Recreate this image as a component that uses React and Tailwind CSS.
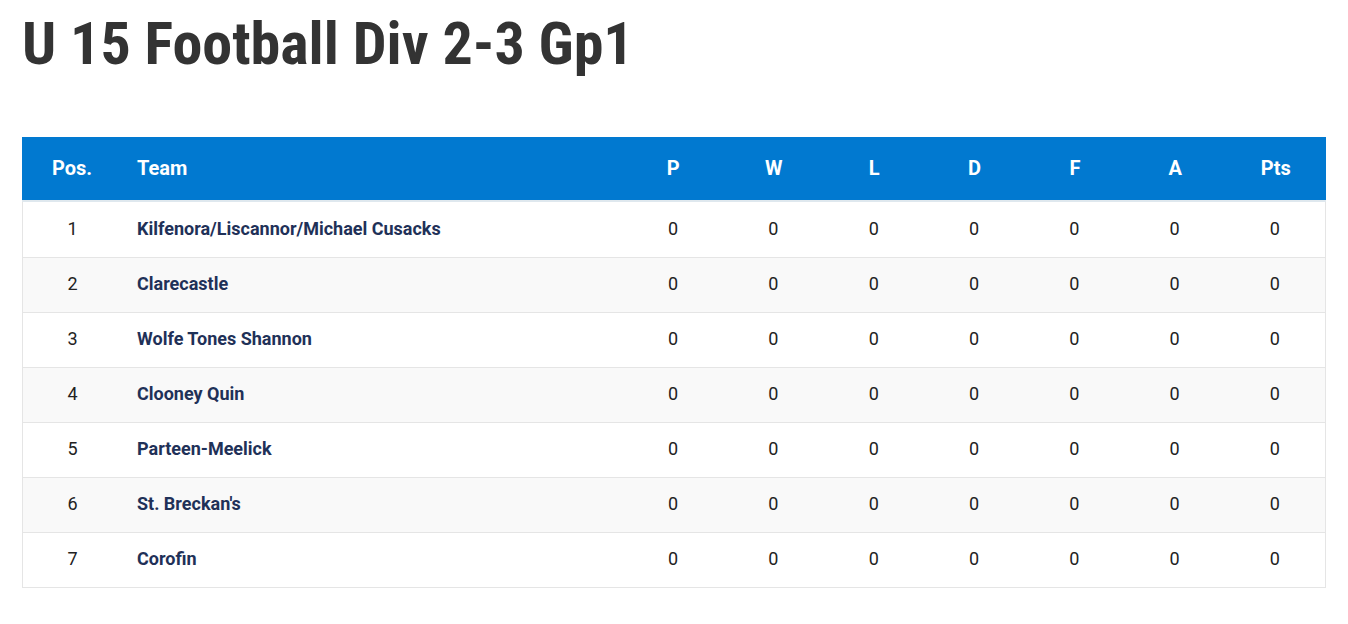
import React from "react";

const teams = [
  "Kilfenora/Liscannor/Michael Cusacks",
  "Clarecastle",
  "Wolfe Tones Shannon",
  "Clooney Quin",
  "Parteen-Meelick",
  "St. Breckan's",
  "Corofin",
];
const cols = ["P", "W", "L", "D", "F", "A", "Pts"];

export default function App() {
  return (
    <div className="bg-white min-h-[624px] px-[22px] pt-[8px]" style={{ fontFamily: "Roboto, 'Liberation Sans', sans-serif" }}>
      <h1
        className="text-[60px] leading-[72px] font-bold text-[#333333]"
        style={{ fontStretch: "75%" }}
      >
        U 15 Football Div 2-3 Gp1
      </h1>
      <div className="mt-[57px] w-[1304px]">
        <div className="flex h-[65px] items-center pb-[2px] bg-[#0179d0] text-white text-[20px] font-bold border-b-[2px] border-[#dfe8ee] box-border">
          <div className="w-[100px] text-center">Pos.</div>
          <div className="w-[501px] pl-[15px]">Team</div>
          {cols.map((c) => (
            <div key={c} className="flex-1 text-center">{c}</div>
          ))}
        </div>
        <div className="border-l border-r border-b border-[#e5e5e5]">
          {teams.map((t, i) => (
            <div
              key={t}
              className={`flex h-[55px] items-center pb-[3px] text-[18px] text-[#222222] ${i > 0 ? "border-t border-[#e5e5e5]" : ""} ${i % 2 === 1 ? "bg-[#f9f9f9]" : "bg-white"}`}
            >
              <div className="w-[99px] text-center">{i + 1}</div>
              <div className="w-[501px] pl-[15px] font-bold text-[#1f3158]">{t}</div>
              {cols.map((c) => (
                <div key={c} className="flex-1 text-center">0</div>
              ))}
            </div>
          ))}
        </div>
      </div>
    </div>
  );
}
